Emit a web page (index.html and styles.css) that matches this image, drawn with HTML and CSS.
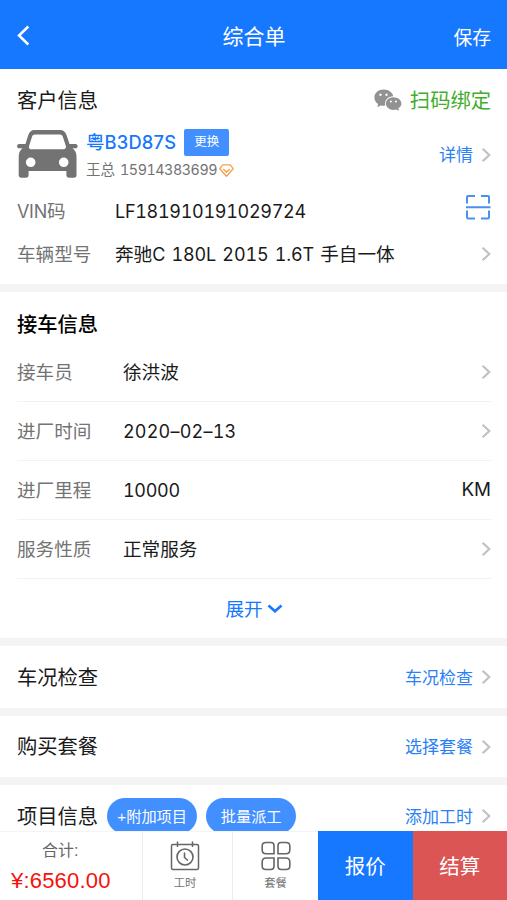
FILE: index.html
```
<!DOCTYPE html>
<html lang="zh-CN">
    <head>
        <meta charset="UTF-8">
        <meta name="viewport" content="width=device-width, initial-scale=1.0">
        <title>综合单</title>
        <link rel="stylesheet" href="styles.css">
    </head>
    <body>
        <!-- 公用箭头 -->
        <svg class="defs">
            <symbol id="arrow" viewBox="0 0 10 16">
                <path d="M1.600 1.700 L8.300 8 L1.600 14.300" fill="none" stroke="#c2c2c2" stroke-width="2.200"/>
            </symbol>
        </svg>

        <header class="header">
            <svg class="back" viewBox="0 0 14 22">
                <path d="M11.300 1.500 L2 10.500 L11.300 19.500" fill="none" stroke="#fff" stroke-width="2.500"/>
            </svg>
            <h1>综合单</h1>
            <span class="save">保存</span>
        </header>

        <!-- 客户信息 -->
        <section class="customer">
            <div class="head">
                <h2>客户信息</h2>
                <div class="bind">
                    <svg class="wechat" viewBox="0 0 28 22">
                        <path d="M9.700 0.500 C4.500 0.500 0.400 4 0.400 8.500 C0.400 11.200 1.800 13.500 4 15 L3.400 18 L6.800 16.400 C8 16.700 9.500 16.800 11.300 16.600 C10 11.500 14 7.300 19.300 7.300 C18.500 3.300 14.500 0.500 9.700 0.500 Z" fill="#929292"/>
                        <path d="M19.400 8.200 C15.200 8.200 11.900 11 11.900 14.500 C11.900 18.100 15.200 20.900 19.400 20.900 C20.400 20.900 21.300 20.800 22.200 20.500 L25 21.800 L24.400 19.300 C26.300 18.100 27.400 16.500 27.400 14.500 C27.400 11 23.800 8.200 19.400 8.200 Z" fill="#929292"/>
                        <circle cx="6.500" cy="5.800" r="1.200" fill="#fff"/>
                        <circle cx="12.500" cy="5.800" r="1.200" fill="#fff"/>
                        <circle cx="16.900" cy="12.600" r="1" fill="#fff"/>
                        <circle cx="21.900" cy="12.600" r="1" fill="#fff"/>
                    </svg>
                    <span>扫码绑定</span>
                </div>
            </div>
            <div class="car">
                <svg class="car-icon" viewBox="0 0 61 48">
                    <path fill-rule="evenodd" fill="#737373" d="M17.500 0 H43 C46.500 0 48.500 2 49.500 5 L52.500 14 H58.500 C61.300 14 61.300 18.300 58.500 18.300 H55.500 C58.500 20.500 59.500 23 59.500 27 V45 Q59.500 47.800 56.700 47.800 H52.200 Q49.400 47.800 49.400 45 V41 H11.600 V45 Q11.600 47.800 8.800 47.800 H4.500 Q1.700 47.800 1.700 45 V27 C1.700 23 2.700 20.500 5.500 18.300 H2.200 C-0.600 18.300 -0.600 14 2.200 14 H8.500 L11.300 5 C12.300 2 14.200 0 17.500 0 Z M18 4.500 C16 4.500 15.500 5.500 14.900 7.300 L12.200 15.500 C11.500 18 12.500 19.200 14.500 19.200 H46.500 C48.500 19.200 49.500 18 48.700 15.500 L46 7.300 C45.400 5.500 44.700 4.500 42.800 4.500 Z M13.700 27.500 A4.800 4.800 0 1 0 13.700 37.100 A4.800 4.800 0 1 0 13.700 27.500 Z M46.700 27.500 A4.800 4.800 0 1 0 46.700 37.100 A4.800 4.800 0 1 0 46.700 27.500 Z"/>
                </svg>
                <div class="car-info">
                    <div class="plate">
                        <span>粤<span class="plate-no">B3D87S</span></span>
                        <span class="change">更换</span>
                    </div>
                    <div class="owner">
                        <span>王总</span>
                        <span class="phone">15914383699</span>
                        <svg class="vip" viewBox="0 0 15 13">
                            <path d="M3.700 0.800 H11.300 L14.200 4.700 L7.500 12.200 L0.800 4.700 Z M4.300 5 L7.500 8.200 L10.700 5" fill="none" stroke="#f5a04c" stroke-width="1.300" stroke-linejoin="round"/>
                        </svg>
                    </div>
                </div>
                <div class="link"><span>详情</span><svg class="arrow"><use href="#arrow"/></svg></div>
            </div>
            <div class="item">
                <span class="label"><span class="vin">VIN</span>码</span>
                <span class="value num">LF181910191029724</span>
                <svg class="scan" viewBox="0 0 26 26">
                    <path d="M2 9.500 V3 Q2 2 3 2 H10 M16 2 H23 Q24 2 24 3 V9.500 M24 16.500 V23 Q24 24.500 23 24.500 H16 M10 24.500 H3 Q2 24.500 2 23 V16.500 M1 13.200 H25.500" fill="none" stroke="#4a90f0" stroke-width="2"/>
                </svg>
            </div>
            <div class="item">
                <span class="label">车辆型号</span>
                <span class="value">奔驰<span class="num">C 180L 2015 1.6T </span>手自一体</span>
                <svg class="arrow"><use href="#arrow"/></svg>
            </div>
        </section>

        <!-- 接车信息 -->
        <section class="receive">
            <h2 class="bold">接车信息</h2>
            <div class="row">
                <span class="label">接车员</span>
                <span class="value">徐洪波</span>
                <svg class="arrow"><use href="#arrow"/></svg>
            </div>
            <div class="row">
                <span class="label">进厂时间</span>
                <span class="value num date">2020–02–13</span>
                <svg class="arrow"><use href="#arrow"/></svg>
            </div>
            <div class="row">
                <span class="label">进厂里程</span>
                <span class="value num">10000</span>
                <span class="unit">KM</span>
            </div>
            <div class="row">
                <span class="label">服务性质</span>
                <span class="value">正常服务</span>
                <svg class="arrow"><use href="#arrow"/></svg>
            </div>
            <div class="expand">
                <span>展开</span>
                <svg class="down" viewBox="0 0 16 10">
                    <path d="M1.500 1.500 L8 7.200 L14.500 1.500" fill="none" stroke="#1677ff" stroke-width="2.600"/>
                </svg>
            </div>
        </section>

        <section class="single">
            <h2>车况检查</h2>
            <div class="link"><span>车况检查</span><svg class="arrow"><use href="#arrow"/></svg></div>
        </section>

        <section class="single package">
            <h2>购买套餐</h2>
            <div class="link"><span>选择套餐</span><svg class="arrow"><use href="#arrow"/></svg></div>
        </section>

        <section class="single">
            <h2>项目信息</h2>
            <span class="pill">+附加项目</span>
            <span class="pill">批量派工</span>
            <div class="link"><span>添加工时</span><svg class="arrow"><use href="#arrow"/></svg></div>
        </section>

        <!-- 底部操作栏 -->
        <footer class="footer">
            <div class="total">
                <span class="total-name">合计:</span>
                <span class="price">¥:6560.00</span>
            </div>
            <div class="tab hours">
                <svg viewBox="0 0 30 30">
                    <path d="M3 3.500 H27 Q28.500 3.500 28.500 5 V27 Q28.500 28.500 27 28.500 H3 Q1.500 28.500 1.500 27 V5 Q1.500 3.500 3 3.500 Z M7.500 0.500 V6 M22.500 0.500 V6" fill="none" stroke="#666" stroke-width="1.500"/>
                    <circle cx="15" cy="16" r="8" fill="none" stroke="#666" stroke-width="1.600"/>
                    <path d="M14.500 11.500 V16.500 L18 19.500" fill="none" stroke="#666" stroke-width="1.600"/>
                </svg>
                <span>工时</span>
            </div>
            <div class="tab">
                <svg viewBox="0 0 30 30">
                    <path d="M5 1.500 H10 Q13 1.500 13 4.500 V12.700 H5 Q1.200 12.700 1.200 9 V5 Q1.200 1.500 5 1.500 Z M20 1.500 H25 Q28.800 1.500 28.800 5 V9 Q28.800 12.700 25 12.700 H17 V4.500 Q17 1.500 20 1.500 Z M5 17 H13 V25 Q13 28.500 9.500 28.500 H5 Q1.200 28.500 1.200 25 V21 Q1.200 17 5 17 Z M17 17 H25 Q28.800 17 28.800 21 V25 Q28.800 28.500 25 28.500 H20.500 Q17 28.500 17 25 Z" fill="none" stroke="#666" stroke-width="1.600"/>
                </svg>
                <span>套餐</span>
            </div>
            <div class="btn quote">报价</div>
            <div class="btn settle">结算</div>
        </footer>
    </body>
</html>
```

FILE: styles.css
```
* {
    margin: 0;
    padding: 0;
    box-sizing: border-box;
}

body {
    height: 900px;
    overflow: hidden;
    background-color: #f4f4f4;
    color: #1a1a1a;
    font-family: "Liberation Sans", "Noto Sans CJK SC", sans-serif;
    font-size: 18.6px;
    line-height: 1.4;
    white-space: nowrap;
}

svg {
    display: block;
    flex-shrink: 0;
}

.defs {
    display: none;
}

section {
    padding: 0 16px 0 17px;
    margin-bottom: 8px;
    background-color: #fff;
}

h2 {
    padding-top: 2px;
    font-size: 20.3px;
    font-weight: 400;
}

/* 顶部导航 */
.header {
    display: grid;
    grid-template-columns: 1fr auto 1fr;
    align-items: center;
    height: 69px;
    padding: 3px 16px 0 17px;
    background-color: #1677ff;
    color: #fff;
}

.header h1 {
    padding-top: 1px;
    font-size: 21px;
    font-weight: 400;
}

.back {
    width: 14px;
    height: 22px;
}

.save {
    padding-top: 6px;
    font-size: 18.8px;
    text-align: right;
}

/* 客户信息 */
.customer {
    height: 215px;
    padding-top: 9px;
}

.head {
    display: flex;
    align-items: center;
    justify-content: space-between;
    height: 44px;
}

.bind {
    display: flex;
    align-items: center;
    gap: 8px;
    color: #3fae2a;
    font-size: 20.3px;
}

.bind span {
    padding-top: 2px;
}

.wechat {
    width: 28px;
    height: 22px;
}

.car {
    display: flex;
    align-items: center;
    height: 68px;
}

.car-icon {
    width: 61px;
    height: 48px;
    margin-top: -4px;
}

.car-info {
    margin-left: 8px;
}

.plate {
    display: flex;
    align-items: center;
    gap: 8px;
    height: 27px;
    color: #1677ff;
    font-size: 18.6px;
    font-weight: 500;
}

.plate span:first-child {
    padding-top: 1px;
}

.plate-no {
    font-family: Inter, sans-serif;
    font-size: 18.3px;
    letter-spacing: 0.2px;
}

.change {
    width: 45px;
    height: 27px;
    border-radius: 2px;
    background-color: #428fff;
    color: #fff;
    font-size: 12.5px;
    font-weight: 400;
    line-height: 26px;
    text-align: center;
}

.owner {
    display: flex;
    align-items: center;
    height: 27px;
    padding-top: 2px;
    color: #737373;
    font-size: 14.5px;
}

.phone {
    width: 98px;
    margin-left: 5px;
    font-family: Inter, sans-serif;
    font-size: 14.3px;
    font-variant-numeric: tabular-nums;
    letter-spacing: -0.45px;
}

.vip {
    width: 15px;
    height: 13px;
    margin-left: 1px;
}

.link {
    display: flex;
    align-items: center;
    gap: 8px;
    margin-left: auto;
    color: #2b80f5;
    font-size: 17px;
}

.arrow {
    width: 10px;
    height: 16px;
    margin-top: -1px;
}

.item {
    display: flex;
    align-items: center;
    height: 43px;
}

.label {
    width: 98px;
    padding-top: 2px;
    color: #737373;
}

.vin {
    font-family: Inter, sans-serif;
    font-size: 18px;
    letter-spacing: -0.3px;
}

.value {
    flex: 1;
    padding-top: 2px;
}

.num,
.unit {
    font-family: Inter, sans-serif;
    font-size: 18px;
    font-variant-numeric: tabular-nums;
    letter-spacing: -0.3px;
    word-spacing: 1.4px;
    white-space: pre;
}

.value.num,
.unit {
    padding-top: 1px;
}

.value .num {
    letter-spacing: -0.1px;
}

.date {
    letter-spacing: 0.2px;
}

.unit {
    font-size: 18.8px;
    letter-spacing: 0;
}

.scan {
    width: 26px;
    height: 26px;
    margin-top: -9px;
}

/* 接车信息 */
.receive {
    height: 346px;
    padding-top: 13px;
}

.receive .label {
    width: 106px;
}

.bold {
    height: 38px;
    padding-top: 0;
    color: #000;
    font-weight: 500;
    line-height: 41px;
}

.row {
    display: flex;
    align-items: center;
    height: 59px;
    border-bottom: 1px solid #f2f2f2;
}

.expand {
    display: flex;
    align-items: center;
    justify-content: center;
    gap: 4px;
    height: 59px;
    color: #1677ff;
}

.expand span {
    padding-top: 4px;
}

.down {
    width: 16px;
    height: 10px;
}

/* 单行模块 */
.single {
    display: flex;
    align-items: center;
    height: 62px;
}

.single .link span {
    padding-top: 3px;
}

.single .arrow {
    margin-top: 1px;
}

.package {
    height: 61px;
}

.pill {
    width: 90px;
    height: 36px;
    margin-left: 9px;
    border-radius: 18px;
    background-color: #428fff;
    color: #fff;
    font-size: 15.2px;
    line-height: 38px;
    text-align: center;
}

/* 底部操作栏 */
.footer {
    position: fixed;
    left: 0;
    bottom: 0;
    display: flex;
    width: 100%;
    height: 69px;
    border-top: 1px solid #f4f4f4;
    background-color: #fff;
}

.total {
    display: flex;
    flex-direction: column;
    width: 142px;
    padding-top: 7px;
}

.total-name {
    margin-left: 42px;
    color: #666;
    font-size: 16px;
    line-height: 24px;
}

.price {
    margin-left: 11px;
    color: #f5120c;
    font-size: 22px;
    letter-spacing: 0.2px;
    line-height: 36px;
}

.tab {
    display: flex;
    flex-direction: column;
    align-items: center;
    width: 86px;
    padding-top: 9px;
    border-left: 1px solid #ececec;
    color: #737373;
    font-size: 11.3px;
}

.hours {
    width: 90px;
    padding-right: 5px;
}

.tab svg {
    width: 30px;
    height: 30px;
    margin-bottom: 5px;
}

.btn {
    flex: 1;
    margin-top: -1px;
    color: #fff;
    font-size: 20.5px;
    line-height: 71px;
    text-align: center;
}

.quote {
    background-color: #1677ff;
}

.settle {
    background-color: #db5555;
}
```
